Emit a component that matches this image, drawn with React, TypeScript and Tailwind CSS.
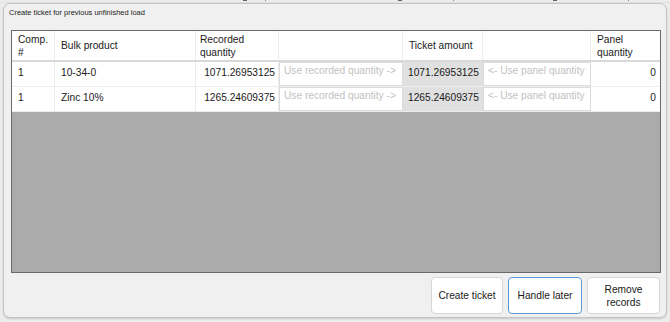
const font = { fontFamily: '"Liberation Sans", Arial, sans-serif' }

interface Row {
  comp: string
  product: string
  recorded: string
  ticket: string
  panel: string
}

const rows: Row[] = [
  { comp: '1', product: '10-34-0', recorded: '1071.26953125', ticket: '1071.26953125', panel: '0' },
  { comp: '1', product: 'Zinc 10%', recorded: '1265.24609375', ticket: '1265.24609375', panel: '0' },
]

const cols = 'grid grid-cols-[43px_141px_83px_124px_80px_108px_69px]'

function BgStrip() {
  return (
    <div className="h-[3px] flex items-start text-[0px] border-b border-[#e2e2e2]">
      <div className="w-[243px]" />
      <div className="w-[4px] h-[1px] bg-[#666]" />
      <div className="w-[18px]" />
      <div className="w-[1px] h-[1px] bg-[#888]" />
      <div className="w-[132px]" />
      <div className="w-[4px] h-[1px] bg-[#666]" />
      <div className="w-[51px]" />
      <div className="w-[1px] h-[1px] bg-[#888]" />
      <div className="w-[99px]" />
      <div className="w-[4px] h-[1px] bg-[#666]" />
      <div className="w-[71px]" />
      <div className="w-[1px] h-[1px] bg-[#888]" />
    </div>
  )
}

export default function App() {
  return (
    <div className="w-[670px] h-[322px] bg-[#ececec] overflow-hidden text-[#1a1a1a]" style={font}>
      <BgStrip />
      <div className="ml-[3px] w-[664px] h-[315px] bg-[#f0f0f0] border border-[#c4c4c4] rounded-[7px] shadow-[0_1px_2px_rgba(0,0,0,0.15)] flex flex-col">
        <div className="h-[26px] pl-[5px] pt-[4px] text-[7.5px] leading-[10px] text-[#222]">
          Create ticket for previous unfinished load
        </div>
        <div className="ml-[7px] w-[650px] h-[243px] border border-[#6a6a6a] flex flex-col bg-[#ababab]">
          <div className={`${cols} bg-white h-[31px] border-b-2 border-[#d9d9d9] text-[10.2px] leading-[13px]`}>
            <div className="border-r border-[#ececec] px-[6px] flex items-center">Comp.<br />#</div>
            <div className="border-r border-[#ececec] px-[6px] flex items-center">Bulk product</div>
            <div className="border-r border-[#ececec] px-[4px] flex items-center">Recorded<br />quantity</div>
            <div className="border-r border-[#ececec]" />
            <div className="border-r border-[#ececec] px-[6px] flex items-center">Ticket amount</div>
            <div className="border-r border-[#ececec]" />
            <div className="px-[6px] flex items-center">Panel<br />quantity</div>
          </div>
          {rows.map((r, i) => (
            <div key={i} className={`${cols} bg-white h-[25px] border-b border-[#ececec] text-[10.2px]`}>
              <div className="border-r border-[#ececec] px-[6px] flex items-center pb-[2px]">{r.comp}</div>
              <div className="border-r border-[#ececec] px-[6px] flex items-center pb-[2px]">{r.product}</div>
              <div className="border-r border-[#ececec] pr-[3px] flex items-center justify-end pb-[2px]">{r.recorded}</div>
              <div className="border border-[#dcdcdc] px-[4px] pt-[2px] text-[#c2c2c2] leading-[12px] whitespace-nowrap overflow-hidden">
                Use recorded quantity -&gt;
              </div>
              <div className="bg-[#e0e0e0] px-[5px] flex items-center pb-[2px]">{r.ticket}</div>
              <div className="border border-[#dcdcdc] px-[4px] pt-[2px] text-[#c2c2c2] leading-[12px] whitespace-nowrap overflow-hidden">
                &lt;- Use panel quantity
              </div>
              <div className="pr-[4px] flex items-center justify-end pb-[2px]">{r.panel}</div>
            </div>
          ))}
          <div className="flex-1" />
        </div>
        <div className="flex justify-end gap-[5px] pr-[6px] pt-[4px] text-[10.2px] leading-[13px]">
          <button className="w-[72px] h-[37px] bg-white border border-[#d6d6d6] rounded-[4px]">Create ticket</button>
          <button className="w-[74px] h-[37px] bg-white border border-[#5b9bd5] rounded-[4px]">Handle later</button>
          <button className="w-[73px] h-[37px] bg-white border border-[#d6d6d6] rounded-[4px]">Remove<br />records</button>
        </div>
      </div>
    </div>
  )
}
